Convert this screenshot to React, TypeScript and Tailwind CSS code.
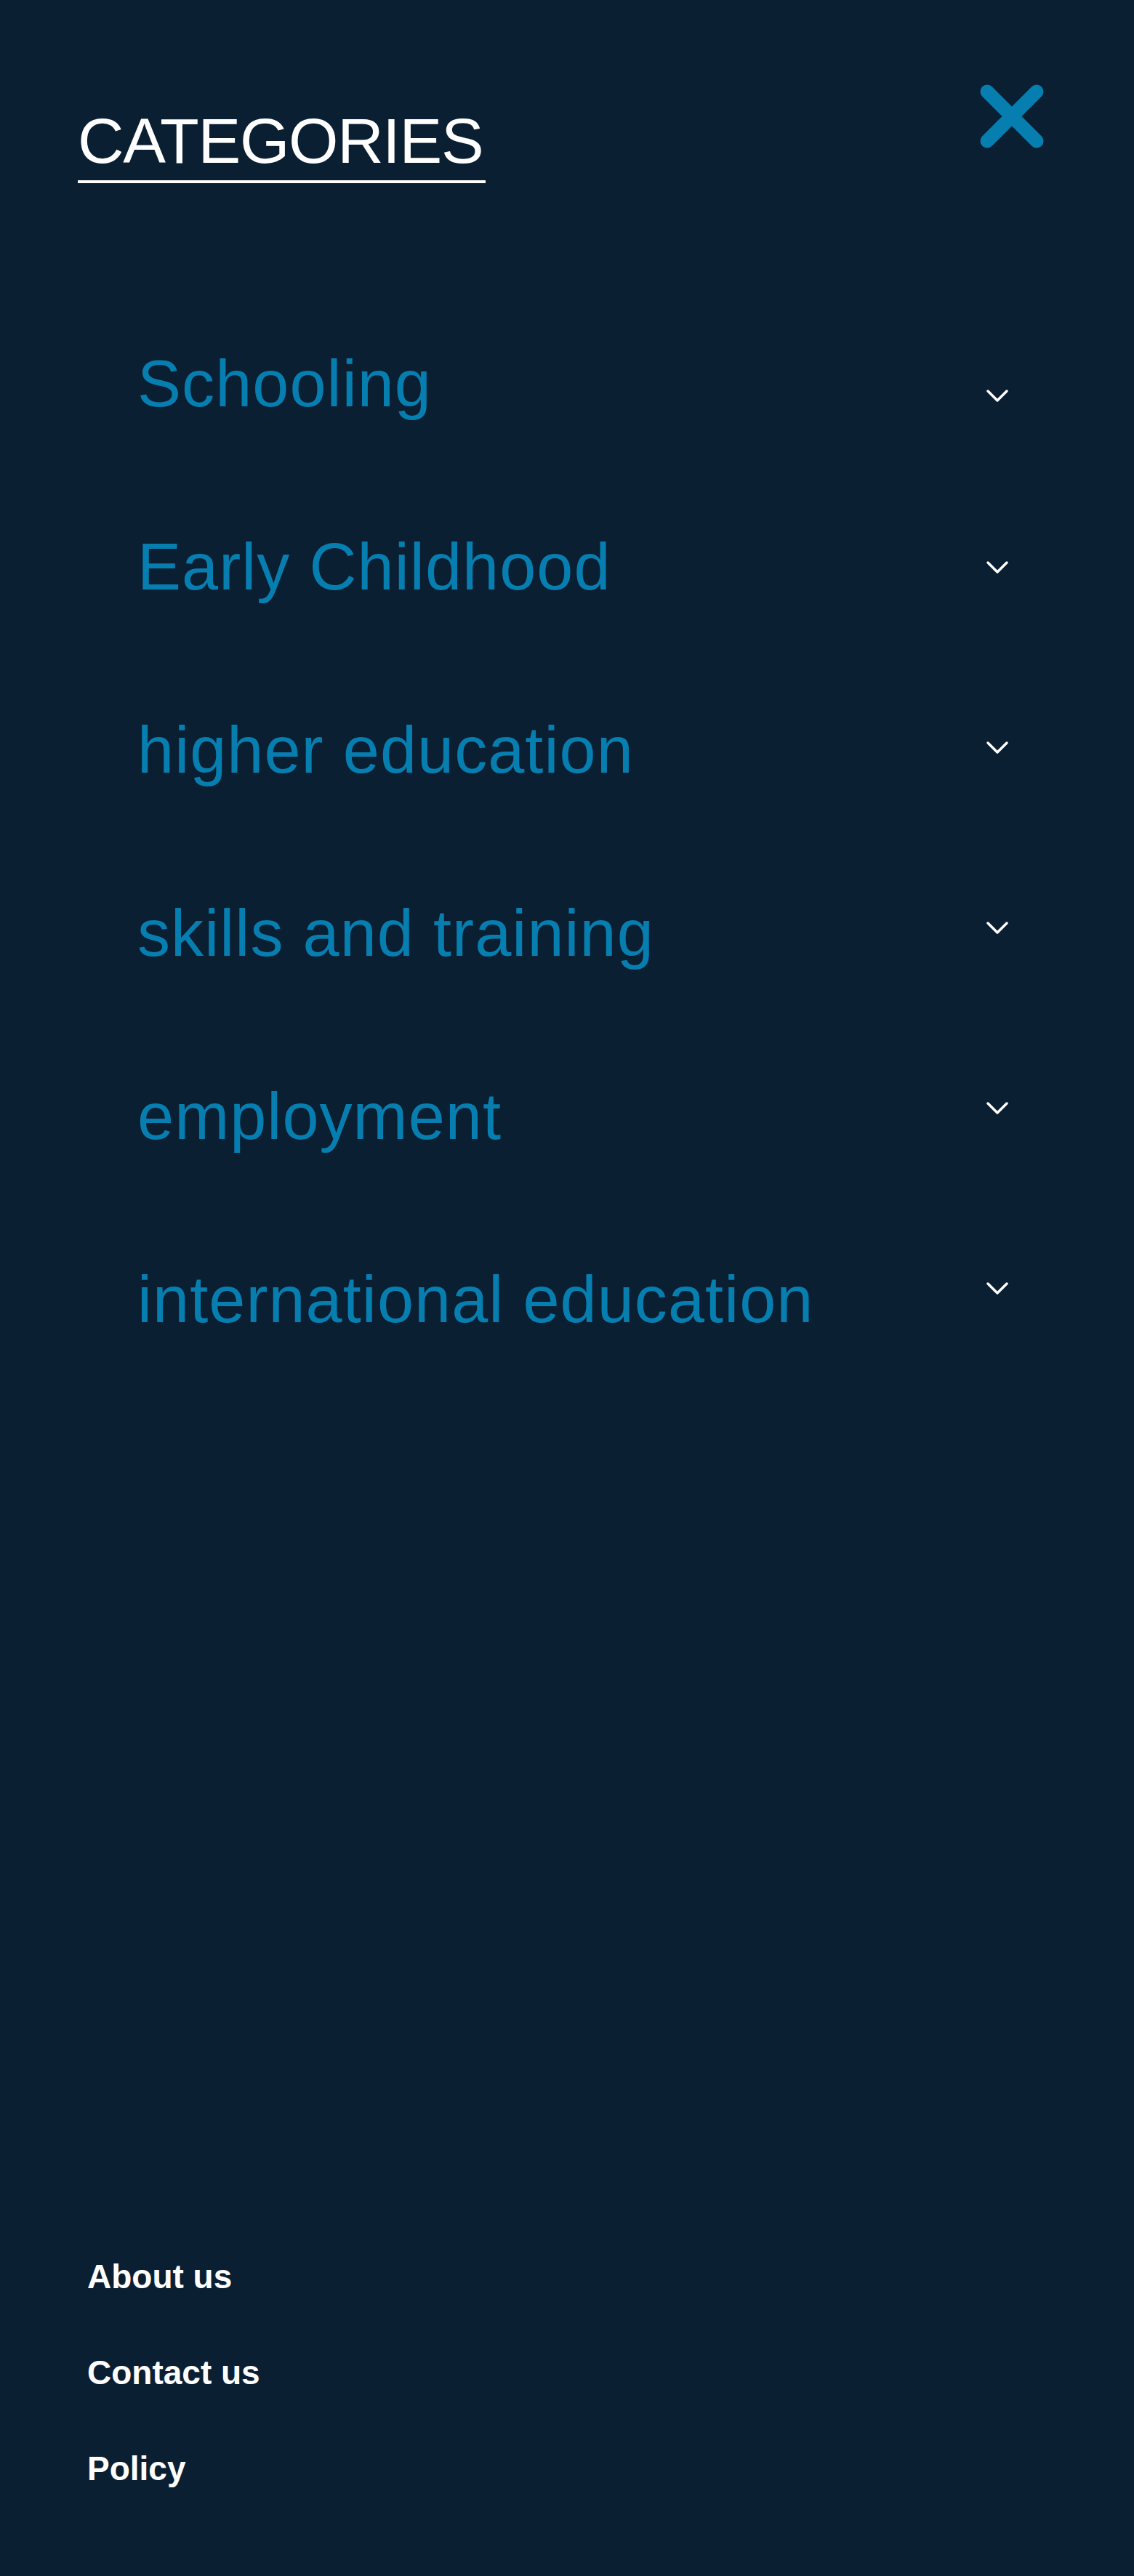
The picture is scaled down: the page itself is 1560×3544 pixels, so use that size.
const categories = [
  { name: "Schooling", chevron: "mt-[132px]" },
  { name: "Early Childhood", chevron: "mt-[116px]" },
  { name: "higher education", chevron: "mt-[112px]" },
  { name: "skills and training", chevron: "mt-[108px]" },
  { name: "employment", chevron: "mt-[104px]" },
  { name: "international education", chevron: "mt-[100px]" },
];

const links = ["About us", "Contact us", "Policy"];

const Chevron = () => (
  <svg className="block" width="34" height="21" viewBox="0 0 34 21" fill="none">
    <polyline
      points="4,4 17,17 30,4"
      stroke="white"
      strokeWidth="3.5"
      strokeLinecap="round"
      strokeLinejoin="round"
    />
  </svg>
);

const App = () => {
  return (
    <div className="flex min-h-screen w-full flex-col bg-[#0b1f33] font-['Liberation_Sans',Arial,sans-serif]">
      {/* header */}
      <div className="flex items-start justify-between pl-[107px] pr-[122px] pt-[114px]">
        <h2 className="mt-[36px] border-b-4 border-white pb-[10px] pr-[4px] text-[88px] leading-none tracking-[-0.015em] text-white">
          CATEGORIES
        </h2>
        <button className="flex h-[92px] w-[92px] items-center justify-center text-[#077eb0]">
          <svg width="92" height="92" viewBox="0 0 92 92" fill="none">
            <line x1="12" y1="12" x2="80" y2="80" stroke="currentColor" strokeWidth="19" strokeLinecap="round" />
            <line x1="80" y1="12" x2="12" y2="80" stroke="currentColor" strokeWidth="19" strokeLinecap="round" />
          </svg>
        </button>
      </div>

      {/* categories */}
      <ul className="mt-[150px] flex flex-col pl-[189px] pr-[171px]">
        {categories.map((c) => (
          <li key={c.name} className="flex h-[252px] items-start justify-between">
            <span className="mt-[81px] text-[90px] leading-none tracking-[0.012em] text-[#077eb0]">{c.name}</span>
            <span className={`block ${c.chevron}`}>
              <Chevron />
            </span>
          </li>
        ))}
      </ul>

      {/* footer links */}
      <div className="mt-auto flex flex-col gap-[86px] pb-[125px] pl-[120px]">
        {links.map((l) => (
          <a key={l} className="text-[46px] font-bold leading-none text-white">
            {l}
          </a>
        ))}
      </div>
    </div>
  );
};

export default App;
